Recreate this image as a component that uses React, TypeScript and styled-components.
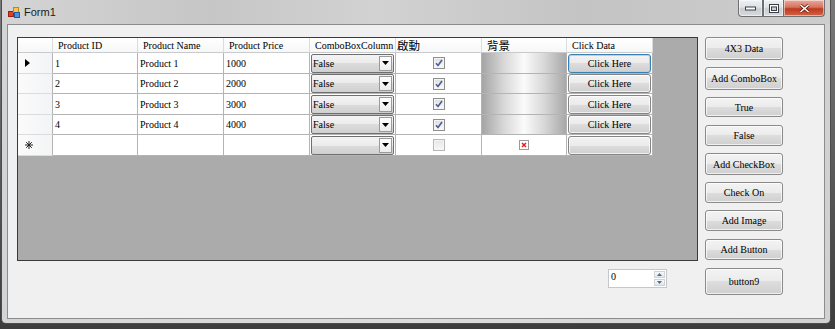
import React from 'react';
import styled, { createGlobalStyle } from 'styled-components';

const GlobalStyle = createGlobalStyle`
  html, body {
    margin: 0;
    padding: 0;
  }
  body {
    width: 835px;
    height: 329px;
    overflow: hidden;
    background: linear-gradient(#7a7a7a, #3c3c3c);
    font-family: "Liberation Serif", "Noto Sans CJK TC", serif;
  }
  * {
    box-sizing: border-box;
  }
`

const Window = styled.div`
  margin-left: 1px;
  width: 830px;
  height: 324px;
  display: flex;
  flex-direction: column;
  background: linear-gradient(to right, #d2d4d6, #dadcde 50%, #cfd1d3);
  border: 1px solid #4d4d4d;
  border-top: none;
  border-radius: 0 0 5px 5px;
`

const TitleBar = styled.div`
  height: 24px;
  flex: none;
  display: flex;
  align-items: flex-start;
  padding-left: 6px;
  background: linear-gradient(to right, #d4d4d4, #c6c6c6 25%, #d2d2d2 45%, #c4c4c4 70%, #cdcdcd);
`

const TitleText = styled.span`
  margin: 5px 0 0 4px;
  font-family: "Liberation Sans", Arial, sans-serif;
  font-size: 11px;
  line-height: 14px;
  color: #1b1b1b;
`

const TitleIcon = styled.svg`
  margin-top: 7px;
`

const CaptionGroup = styled.div`
  margin-left: auto;
  margin-right: 5px;
  display: flex;
  height: 17px;
`

const CaptionButton = styled.div<{ $w: number; $close?: boolean }>`
  width: ${p => p.$w}px;
  height: 17px;
  display: flex;
  align-items: center;
  justify-content: center;
  border: 1px solid #6d6f73;
  border-top: none;
  border-left-width: ${p => (p.$close ? 0 : 1)}px;
  background: ${p =>
    p.$close
      ? 'linear-gradient(#e9a99c, #d6735f 45%, #c0391e 55%, #d0644a)'
      : 'linear-gradient(#eef0f2, #dfe2e5 45%, #c9ccd0 55%, #d8dbde)'};
  box-shadow: inset 0 0 0 1px rgba(255, 255, 255, 0.5);
  &:first-child {
    border-radius: 0 0 0 4px;
  }
  &:last-child {
    border-radius: 0 0 4px 0;
  }
`

const Client = styled.div`
  flex: 1;
  margin: 0 5px 4px 5px;
  border: 1px solid #8c8c8c;
  background: #f0f0f0;
  display: flex;
  padding: 12px 0 0 9px;
`

const LeftColumn = styled.div`
  display: flex;
  flex-direction: column;
`

const GridView = styled.div`
  width: 681px;
  height: 224px;
  border: 1px solid #3a3a3a;
  background: #ababab;
  display: flex;
  align-items: flex-start;
`

const Table = styled.div`
  display: grid;
  grid-template-columns: 35px 85px 86px 86px 86px 86px 85px 86px;
  grid-template-rows: 15px 21px 20px 21px 20px 21px;
  font-size: 10px;
  color: #000;
`

const HeaderCell = styled.div<{ $pad?: number; $cjk?: boolean }>`
  display: flex;
  align-items: center;
  padding-left: ${p => p.$pad ?? 5}px;
  background: linear-gradient(#ffffff, #f6f7f8);
  border-right: 1px solid #dadcdf;
  border-bottom: 1px solid #c8cacd;
  font-size: ${p => (p.$cjk ? 11.5 : 10)}px;
  font-family: ${p => (p.$cjk ? '"Noto Sans CJK TC", sans-serif' : 'inherit')};
  white-space: nowrap;
  overflow: hidden;
`

const RowHeader = styled.div`
  display: flex;
  align-items: center;
  padding-left: 7px;
  background: linear-gradient(to right, #fbfbfb, #f3f4f5);
  border-right: 1px solid #b4b4b4;
  border-bottom: 1px solid #dcdcdc;
`

const Cell = styled.div<{ $center?: boolean }>`
  display: flex;
  align-items: center;
  justify-content: ${p => (p.$center ? 'center' : 'flex-start')};
  background: #fff;
  border-right: 1px solid #b4b4b4;
  border-bottom: 1px solid #b4b4b4;
  min-width: 0;
`

const TextCell = styled(Cell)`
  padding-left: 2px;
  white-space: nowrap;
`

const ImageCell = styled(Cell)`
  justify-content: center;
  background: linear-gradient(to right, #a4a4a4, #d6d6d6 25%, #fbfbfb 50%, #d6d6d6 75%, #a8a8a8);
`

const ComboBox = styled.div`
  margin: 0 1px 0 1px;
  flex: 1;
  height: 19px;
  display: flex;
  border: 1px solid #6f6f6f;
  border-radius: 2px;
  background: linear-gradient(#f4f4f4, #ebebeb 50%, #dcdcdc 50%, #d0d0d0);
`

const ComboText = styled.span`
  flex: 1;
  padding-left: 1px;
  line-height: 17px;
`

const ComboArrow = styled.div`
  width: 13px;
  margin: 1px;
  display: flex;
  align-items: center;
  justify-content: center;
  border: 1px solid #9a9a9a;
  background: linear-gradient(#ffffff, #ececec);
`

const CheckBox = styled.div<{ $off?: boolean }>`
  width: 12px;
  height: 12px;
  display: flex;
  align-items: center;
  justify-content: center;
  border: 1px solid ${p => (p.$off ? '#b8b8b8' : '#8e8f8f')};
  background: ${p => (p.$off ? 'linear-gradient(#e6e6e6, #f8f8f8)' : 'linear-gradient(#dcdcdc, #fefefe)')};
  box-shadow: inset 0 0 0 1px #f4f4f4;
`

const CellButton = styled.div<{ $focused?: boolean }>`
  margin: 0 1px;
  flex: 1;
  height: 19px;
  display: flex;
  align-items: center;
  justify-content: center;
  border: 1px solid ${p => (p.$focused ? '#3c7fb1' : '#858585')};
  border-radius: 3px;
  background: linear-gradient(#f3f3f3, #ebebeb 50%, #dddddd 50%, #cfcfcf);
  box-shadow: inset 0 0 0 1px ${p => (p.$focused ? '#a9d5f4' : 'rgba(255,255,255,0.7)')};
  font-size: 10px;
`

const BrokenImage = styled.div`
  width: 10px;
  height: 10px;
  border: 1px solid #9a9a9a;
  background: #fff;
  display: flex;
  align-items: center;
  justify-content: center;
`

const BottomRow = styled.div`
  display: flex;
  justify-content: flex-end;
  padding-right: 31px;
  margin-top: 8px;
`

const NumericBox = styled.div`
  width: 59px;
  height: 19px;
  display: flex;
  border: 1px solid #c5c7ca;
  background: #fff;
  padding: 1px;
`

const NumericText = styled.span`
  flex: 1;
  padding-left: 1px;
  font-size: 10px;
  line-height: 11px;
`

const Spinner = styled.div`
  width: 11px;
  display: flex;
  flex-direction: column;
  gap: 1px;
`

const SpinHalf = styled.div`
  flex: 1;
  display: flex;
  align-items: center;
  justify-content: center;
  border: 1px solid #d0d3d6;
  background: linear-gradient(#f6f7f8, #e3e6ea);
`

const RightColumn = styled.div`
  margin-left: 7px;
  width: 78px;
  display: flex;
  flex-direction: column;
`

const SideButton = styled.div<{ $h: number; $mt: number }>`
  height: ${p => p.$h}px;
  margin-top: ${p => p.$mt}px;
  display: flex;
  align-items: center;
  justify-content: center;
  border: 1px solid #8a8a8a;
  border-radius: 3px;
  background: linear-gradient(#f3f3f3, #ebebeb 50%, #dddddd 50%, #cfcfcf);
  box-shadow: inset 0 0 0 1px rgba(255, 255, 255, 0.7);
  font-size: 10px;
  white-space: nowrap;
`

const columns = [
  { label: 'Product ID' },
  { label: 'Product Name' },
  { label: 'Product Price' },
  { label: 'ComboBoxColumn' },
  { label: '啟動', cjk: true, pad: 1 },
  { label: '背景', cjk: true },
  { label: 'Click Data' },
]

const rows = [
  { id: '1', name: 'Product 1', price: '1000' },
  { id: '2', name: 'Product 2', price: '2000' },
  { id: '3', name: 'Product 3', price: '3000' },
  { id: '4', name: 'Product 4', price: '4000' },
]

const sideButtons = [
  { label: '4X3 Data', h: 23, mt: 0 },
  { label: 'Add ComboBox', h: 23, mt: 7 },
  { label: 'True', h: 20, mt: 7 },
  { label: 'False', h: 21, mt: 8 },
  { label: 'Add CheckBox', h: 22, mt: 7 },
  { label: 'Check On', h: 21, mt: 7 },
  { label: 'Add Image', h: 21, mt: 7 },
  { label: 'Add Button', h: 21, mt: 8 },
  { label: 'button9', h: 27, mt: 8 },
]

const FormIcon = () => (
  <TitleIcon width="12" height="11" viewBox="0 0 12 11">
    <rect x="0.5" y="4.5" width="5" height="5" fill="#e0402a" stroke="#9a2010" />
    <rect x="5.5" y="0.5" width="5" height="5" fill="#f7c64a" stroke="#b88a10" />
    <rect x="6.5" y="5.5" width="5" height="5" fill="#4f8fe0" stroke="#1f5aa8" />
  </TitleIcon>
)

const DownArrow = () => (
  <svg width="7" height="4" viewBox="0 0 7 4">
    <path d="M0 0h7L3.5 4z" fill="#000" />
  </svg>
)

const CheckMark = () => (
  <svg width="8" height="8" viewBox="0 0 8 8">
    <path d="M1 4.2l2 2.3L7 1" fill="none" stroke="#4a5d9c" strokeWidth="1.6" />
  </svg>
)

function App() {
  return (
    <>
      <GlobalStyle />
      <Window>
        <TitleBar>
          <FormIcon />
          <TitleText>Form1</TitleText>
          <CaptionGroup>
            <CaptionButton $w={25}>
              <svg width="11" height="5" viewBox="0 0 11 5">
                <rect x="0.5" y="1" width="10" height="3" fill="#fff" stroke="#3a3f46" />
              </svg>
            </CaptionButton>
            <CaptionButton $w={21}>
              <svg width="10" height="9" viewBox="0 0 10 9">
                <rect x="0.5" y="0.5" width="9" height="8" fill="none" stroke="#3a3f46" />
                <rect x="1.5" y="1.5" width="7" height="6" fill="none" stroke="#fff" />
                <rect x="2.5" y="3" width="5" height="3.5" fill="none" stroke="#3a3f46" />
              </svg>
            </CaptionButton>
            <CaptionButton $w={41} $close>
              <svg width="11" height="9" viewBox="0 0 11 9">
                <path d="M1.5 1l8 7M9.5 1l-8 7" stroke="#5a1a10" strokeWidth="3" />
                <path d="M1.5 1l8 7M9.5 1l-8 7" stroke="#fff" strokeWidth="1.6" />
              </svg>
            </CaptionButton>
          </CaptionGroup>
        </TitleBar>
        <Client>
          <LeftColumn>
            <GridView>
              <Table>
                <HeaderCell />
                {columns.map(c => (
                  <HeaderCell key={c.label} $cjk={c.cjk} $pad={c.pad}>
                    {c.label}
                  </HeaderCell>
                ))}
                {rows.map((r, i) => (
                  <React.Fragment key={r.id}>
                    <RowHeader>
                      {i === 0 && (
                        <svg width="5" height="8" viewBox="0 0 5 8">
                          <path d="M0 0l5 4-5 4z" fill="#000" />
                        </svg>
                      )}
                    </RowHeader>
                    <TextCell>{r.id}</TextCell>
                    <TextCell>{r.name}</TextCell>
                    <TextCell>{r.price}</TextCell>
                    <Cell>
                      <ComboBox>
                        <ComboText>False</ComboText>
                        <ComboArrow>
                          <DownArrow />
                        </ComboArrow>
                      </ComboBox>
                    </Cell>
                    <Cell $center>
                      <CheckBox>
                        <CheckMark />
                      </CheckBox>
                    </Cell>
                    <ImageCell />
                    <Cell>
                      <CellButton $focused={i === 0}>Click Here</CellButton>
                    </Cell>
                  </React.Fragment>
                ))}
                <RowHeader>
                  <svg width="8" height="8" viewBox="0 0 8 8">
                    <path d="M4 0v8M0 4h8M1.2 1.2l5.6 5.6M6.8 1.2l-5.6 5.6" stroke="#222" strokeWidth="1" />
                  </svg>
                </RowHeader>
                <TextCell />
                <TextCell />
                <TextCell />
                <Cell>
                  <ComboBox>
                    <ComboText />
                    <ComboArrow>
                      <DownArrow />
                    </ComboArrow>
                  </ComboBox>
                </Cell>
                <Cell $center>
                  <CheckBox $off />
                </Cell>
                <Cell $center>
                  <BrokenImage>
                    <svg width="6" height="6" viewBox="0 0 6 6">
                      <path d="M1 1l4 4M5 1L1 5" stroke="#e02020" strokeWidth="1.5" />
                    </svg>
                  </BrokenImage>
                </Cell>
                <Cell>
                  <CellButton />
                </Cell>
              </Table>
            </GridView>
            <BottomRow>
              <NumericBox>
                <NumericText>0</NumericText>
                <Spinner>
                  <SpinHalf>
                    <svg width="5" height="3" viewBox="0 0 5 3">
                      <path d="M0 3h5L2.5 0z" fill="#4a6ea0" />
                    </svg>
                  </SpinHalf>
                  <SpinHalf>
                    <svg width="5" height="3" viewBox="0 0 5 3">
                      <path d="M0 0h5L2.5 3z" fill="#4a6ea0" />
                    </svg>
                  </SpinHalf>
                </Spinner>
              </NumericBox>
            </BottomRow>
          </LeftColumn>
          <RightColumn>
            {sideButtons.map(b => (
              <SideButton key={b.label} $h={b.h} $mt={b.mt}>
                {b.label}
              </SideButton>
            ))}
          </RightColumn>
        </Client>
      </Window>
    </>
  );
}

export default App;
